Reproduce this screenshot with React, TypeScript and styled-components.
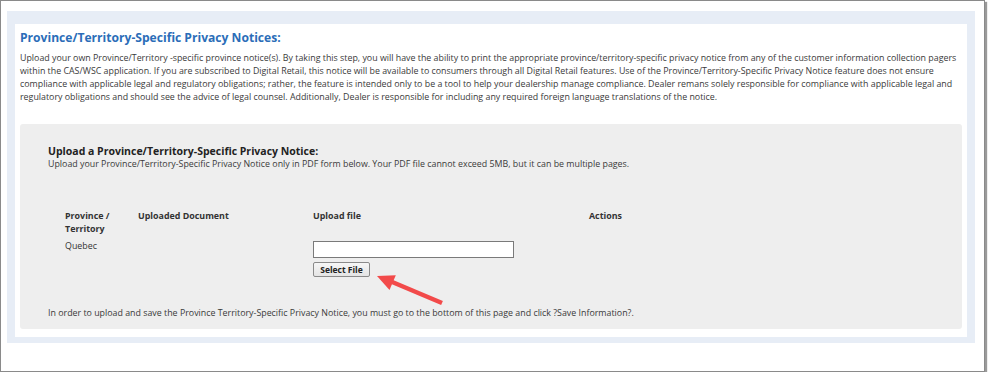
import React from "react";
import styled, { createGlobalStyle } from "styled-components";

const Global = createGlobalStyle`
  html, body { margin: 0; padding: 0; background: #ffffff; }
  body { font-family: "Open Sans", "Liberation Sans", sans-serif; color: #333; }
`;

const Frame = styled.div`
  position: relative;
  box-sizing: border-box;
  width: 985px;
  height: 372px;
  border: 1px solid #8a8a8a;
  box-shadow: 2px 2px 1px #9a9a9a;
  background: #fff;
  padding: 10px 0 0 6px;
`;

const BluePanel = styled.div`
  box-sizing: border-box;
  width: 968px;
  background: #e7edf6;
  padding: 13px 8px 6px 8px;
`;

const WhitePanel = styled.div`
  box-sizing: border-box;
  background: #fff;
  padding: 6px 5px 8px 5px;
`;

const Title = styled.h2`
  margin: 0;
  font-size: 12.1px;
  line-height: 16px;
  font-weight: 700;
  color: #2b6db8;
`;

const Intro = styled.p`
  margin: 6px 0 0 0;
  font-size: 8.85px;
  line-height: 13px;
  color: #3a3a3a;
  white-space: nowrap;
`;

const GrayBox = styled.div`
  margin-top: 20px;
  background: #eeeeee;
  border-radius: 3px;
  padding: 20px 28px 10px 28px;
`;

const BoxHeading = styled.h3`
  margin: 0;
  font-size: 10.5px;
  line-height: 14px;
  font-weight: 700;
  color: #222;
`;

const BoxText = styled.p<{ $mt?: number }>`
  margin: ${(p) => p.$mt ?? 0}px 0 0 0;
  font-size: 8.85px;
  line-height: 12px;
  color: #3a3a3a;
`;

const Table = styled.div`
  margin: 39px 0 0 17px;
  display: grid;
  grid-template-columns: 73px 175px 276px 1fr;
  row-gap: 4px;
`;

const HeadCell = styled.div`
  font-size: 8.9px;
  line-height: 13px;
  font-weight: 700;
  color: #333;
`;

const Cell = styled.div`
  font-size: 8.85px;
  line-height: 13px;
  color: #333;
  padding-top: 1px;
`;

const UploadCell = styled.div`
  display: flex;
  flex-direction: column;
  align-items: flex-start;
  gap: 4px;
  padding-top: 2px;
`;

const FileInput = styled.div`
  box-sizing: border-box;
  width: 201px;
  height: 17px;
  background: #fff;
  border: 1px solid #7a7a7a;
`;

const SelectButton = styled.button`
  box-sizing: border-box;
  width: 57px;
  height: 15px;
  padding: 0;
  border: 1px solid #8a8a8a;
  border-radius: 2px;
  background: linear-gradient(#f6f6f6, #e4e4e4);
  font-family: "Open Sans", "Liberation Sans", sans-serif;
  font-size: 8.5px;
  font-weight: 700;
  color: #222;
`;

const Arrow = styled.svg`
  position: absolute;
  left: 369px;
  top: 267px;
`;

export default function App() {
  return (
    <>
      <Global />
      <Frame>
        <BluePanel>
          <WhitePanel>
            <Title>Province/Territory-Specific Privacy Notices:</Title>
            <Intro>
              Upload your own Province/Territory -specific province notice(s). By taking this step, you will have the ability to print the appropriate province/territory-specific privacy notice from any of the customer information collection pagers
              <br />
              within the CAS/WSC application. If you are subscribed to Digital Retail, this notice will be available to consumers through all Digital Retail features. Use of the Province/Territory-Specific Privacy Notice feature does not ensure
              <br />
              compliance with applicable legal and regulatory obligations; rather, the feature is intended only to be a tool to help your dealership manage compliance. Dealer remans solely responsible for compliance with applicable legal and
              <br />
              regulatory obligations and should see the advice of legal counsel. Additionally, Dealer is responsible for including any required foreign language translations of the notice.
            </Intro>
            <GrayBox>
              <BoxHeading>Upload a Province/Territory-Specific Privacy Notice:</BoxHeading>
              <BoxText>
                Upload your Province/Territory-Specific Privacy Notice only in PDF form below. Your PDF file cannot exceed 5MB, but it can be multiple pages.
              </BoxText>
              <Table>
                <HeadCell>
                  Province /<br />Territory
                </HeadCell>
                <HeadCell>Uploaded Document</HeadCell>
                <HeadCell>Upload file</HeadCell>
                <HeadCell>Actions</HeadCell>
                <Cell>Quebec</Cell>
                <Cell />
                <UploadCell>
                  <FileInput />
                  <SelectButton type="button">Select File</SelectButton>
                </UploadCell>
                <Cell />
              </Table>
              <BoxText $mt={30}>
                In order to upload and save the Province Territory-Specific Privacy Notice, you must go to the bottom of this page and click ?Save Information?.
              </BoxText>
            </GrayBox>
          </WhitePanel>
        </BluePanel>
        <Arrow width="80" height="42" viewBox="0 0 80 42">
          <line x1="72" y1="35" x2="21" y2="13.5" stroke="#f24a4a" strokeWidth="4.5" />
          <polygon points="7,8 19.5,22 25.8,7.2" fill="#f24a4a" />
        </Arrow>
      </Frame>
    </>
  );
}
